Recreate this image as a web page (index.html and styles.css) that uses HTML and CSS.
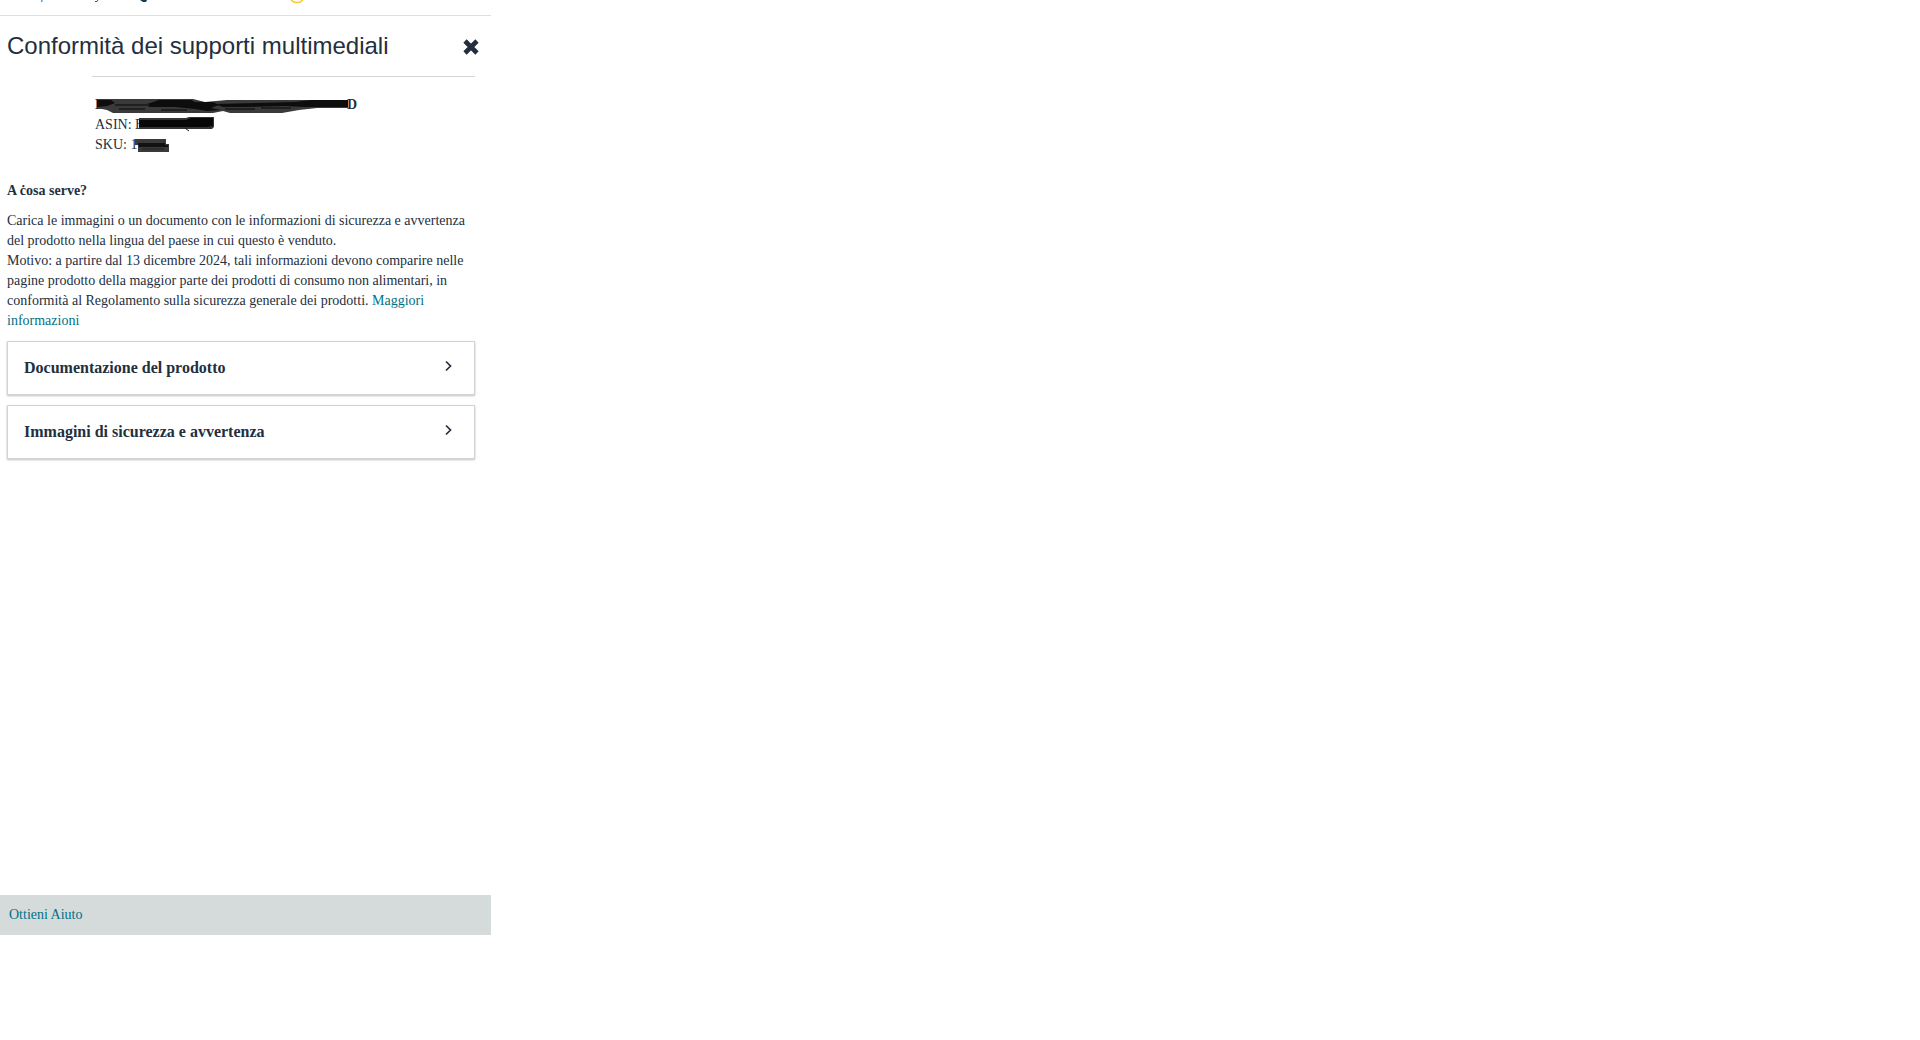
FILE: index.html
```html
<!DOCTYPE html>
<html lang="it">
<head>
    <meta charset="UTF-8">
    <meta name="viewport" content="width=device-width, initial-scale=1.0">
    <title>Conformità dei supporti multimediali</title>
    <link rel="stylesheet" href="styles.css">
</head>
<body>
    <div class="panel">
        <div class="topbar">
            <svg width="320" height="15" viewBox="0 0 320 15" aria-hidden="true">
                <path d="M41.500 0v2" stroke="#d08a50"/>
                <path d="M42.500 0v2" stroke="#8ecbff"/>
                <path d="M95 1.500h2l1-1.500" fill="none" stroke="#6b4030"/>
                <path d="M140 0h7l-1 2h-3z" fill="#143a52"/>
                <path d="M291 0a6 4 0 0 0 12 0" transform="translate(0 -1.500)" fill="none" stroke="#fcc92b" stroke-width="1.600"/>
            </svg>
        </div>
        <header class="header">
            <h1>Conformità dei supporti multimediali</h1>
            <button type="button" class="close" aria-label="Chiudi">
                <svg width="16" height="16" viewBox="0 0 16 16" aria-hidden="true">
                    <path d="M2 2l12 12M14 2L2 14" stroke="#232f3e" stroke-width="4.600"/>
                </svg>
            </button>
        </header>
        <main class="content">
            <section class="product">
                <p class="product-name">
                    <span>L</span><span>D</span>
                    <svg class="mark" width="256" height="15" viewBox="0 0 256 15" aria-hidden="true">
                        <path d="M2 0H98L110 3L132 1H186L200 1L253 1V9H222L204 11L187 14H135L128 12L118 14H18L12 11L2 9z" fill="#3a3a3a"/>
                        <path d="M2 1H16L20 4L12 7L2 8zM52 5L64 1L96 1L100 3H118L124 6L116 9L126 11L112 12L100 10L80 8H54zM120 5L200 3L216 1H253V8H210L190 7L150 8L128 8z" fill="#0d0d0d"/>
                        <path d="M20 6H54M130 10h30M166 9h30M24 10h26M66 11h26" stroke="#202020" stroke-width="2"/>
                    </svg>
                </p>
                <p class="code">ASIN: B
                    <svg class="mark asin" width="76" height="15" viewBox="0 0 76 15" aria-hidden="true">
                        <path d="M0 1H47L50 0H75V10L73 12H0z" fill="#343434"/>
                        <path d="M0 3H47L52 1H74V9L68 10H0z" fill="#080808"/>
                        <path d="M46 11l4 3" stroke="#1a1a1a"/>
                    </svg>
                </p>
                <p class="code">SKU: 1
                    <svg class="mark sku" width="34" height="13" viewBox="0 0 34 13" aria-hidden="true">
                        <path d="M0 0H31V5H34V13H3V6H0z" fill="#3a3a3a"/>
                        <path d="M3 4H30V6H33V8H4z" fill="#121212"/>
                        <path d="M7 10h22" stroke="#222"/>
                    </svg>
                </p>
            </section>
            <section class="info">
                <h2>A ċosa serve?</h2>
                <p>Carica le immagini o un documento con le informazioni di sicurezza e avvertenza del prodotto nella lingua del paese in cui questo è venduto.</p>
                <p>Motivo: a partire dal 13 dicembre 2024, tali informazioni devono comparire nelle pagine prodotto della maggior parte dei prodotti di consumo non alimentari, in conformità al Regolamento sulla sicurezza generale dei prodotti. <a href="#">Maggiori informazioni</a></p>
            </section>
            <div class="cards">
                <button type="button" class="card">
                    <span>Documentazione del prodotto</span>
                    <svg width="8" height="12" viewBox="0 0 8 12" aria-hidden="true">
                        <path d="M2 1.500L6.500 6 2 10.500" fill="none" stroke="#232f3e" stroke-width="1.700"/>
                    </svg>
                </button>
                <button type="button" class="card">
                    <span>Immagini di sicurezza e avvertenza</span>
                    <svg width="8" height="12" viewBox="0 0 8 12" aria-hidden="true">
                        <path d="M2 1.500L6.500 6 2 10.500" fill="none" stroke="#232f3e" stroke-width="1.700"/>
                    </svg>
                </button>
            </div>
        </main>
        <footer class="footer">
            <a href="#">Ottieni Aiuto</a>
        </footer>
    </div>
</body>
</html>
```
FILE: styles.css
```css
* {
    box-sizing: border-box;
}

body {
    margin: 0;
    background-color: #fff;
    color: #232f3e;
    font-family: "Liberation Serif", "Times New Roman", serif;
    font-size: 14px;
    line-height: 20px;
}

h1, h2, p {
    margin: 0;
}

a {
    color: #007185;
    text-decoration: none;
}

a:hover {
    text-decoration: underline;
}

.panel {
    display: flex;
    flex-direction: column;
    width: 100%;
    max-width: 491px;
    min-height: calc(100vh - 105px);
}

.topbar {
    height: 16px;
    border-bottom: 1px solid #dfdfdf;
}

.topbar svg {
    display: block;
}

.header {
    display: flex;
    align-items: center;
    justify-content: space-between;
    height: 60px;
    padding: 0 12px 0 7px;
}

.header h1 {
    font-family: "Liberation Sans", Arial, sans-serif;
    font-size: 24px;
    font-weight: normal;
    line-height: 32px;
}

.close {
    padding: 2px 0 0;
    border: none;
    background: none;
    cursor: pointer;
}

.close svg {
    display: block;
}

.content {
    flex: 1;
    padding: 0 16px 0 7px;
}

.product {
    margin-left: 85px;
    padding: 18px 0 0 3px;
    border-top: 1px solid #d5d5d5;
}

.product p {
    position: relative;
}

.product-name {
    display: flex;
    justify-content: space-between;
    max-width: 262px;
    font-weight: bold;
}

/* pen strokes lie over the product data */
.mark {
    position: absolute;
    left: 0;
    top: 4px;
}

.mark.asin {
    left: 44px;
    top: 2px;
}

.mark.sku {
    left: 40px;
}

.info {
    padding-top: 26px;
}

.info h2 {
    margin-bottom: 10px;
    font-size: 14px;
    line-height: 20px;
}

.cards {
    display: flex;
    flex-direction: column;
    gap: 10px;
    padding-top: 10px;
}

.card {
    display: flex;
    align-items: center;
    justify-content: space-between;
    height: 54px;
    padding: 0 22px 0 16px;
    border: 1px solid #d2d3d6;
    background-color: #fff;
    box-shadow: 0 1px 2px rgba(0, 0, 0, 0.25);
    color: #232f3e;
    font-family: inherit;
    font-size: 16px;
    font-weight: bold;
    line-height: 24px;
    text-align: left;
    cursor: pointer;
}

.card svg {
    margin-bottom: 4px;
}

.footer {
    padding: 10px 9px;
    background-color: #d5dbdb;
}
```
